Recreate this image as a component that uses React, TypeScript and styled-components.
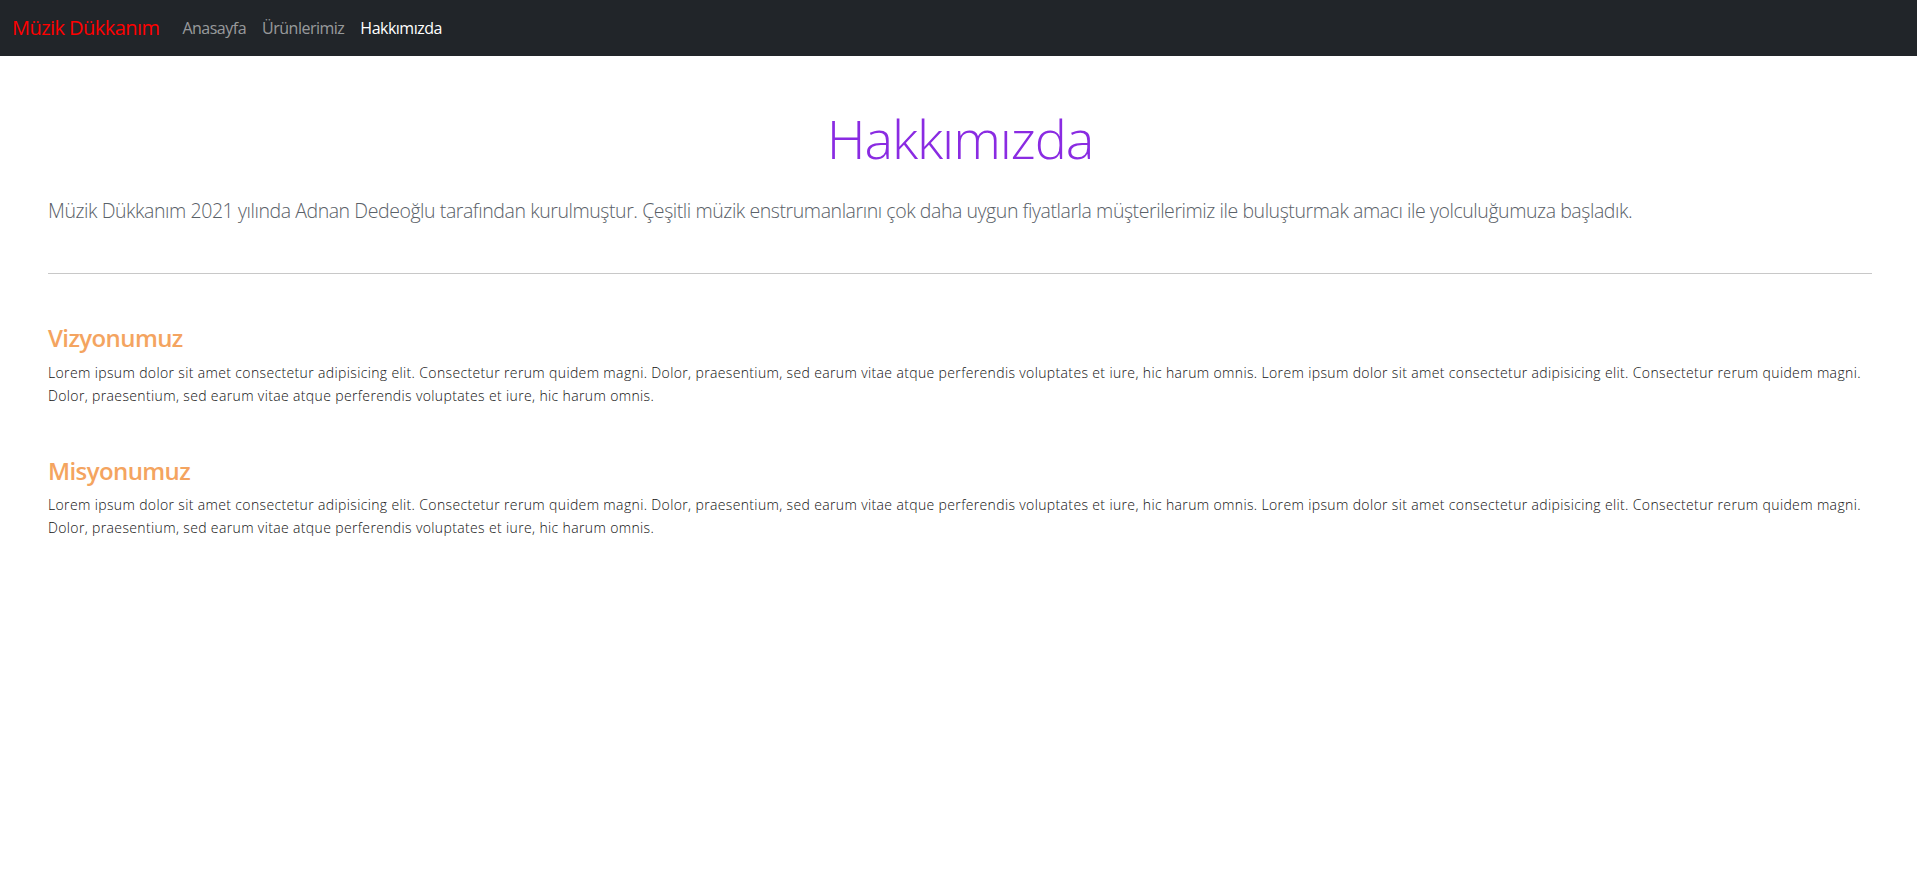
import styled, { createGlobalStyle } from "styled-components";

const GlobalStyle = createGlobalStyle`
  * { box-sizing: border-box; }
  body {
    margin: 0;
    background: #ffffff;
    color: #212529;
    font-family: "Open Sans", "Noto Sans", sans-serif;
    font-size: 16px;
    line-height: 1.5;
  }
`;

const sections = [
  {
    title: "Vizyonumuz",
    text: "Lorem ipsum dolor sit amet consectetur adipisicing elit. Consectetur rerum quidem magni. Dolor, praesentium, sed earum vitae atque perferendis voluptates et iure, hic harum omnis. Lorem ipsum dolor sit amet consectetur adipisicing elit. Consectetur rerum quidem magni. Dolor, praesentium, sed earum vitae atque perferendis voluptates et iure, hic harum omnis.",
  },
  {
    title: "Misyonumuz",
    text: "Lorem ipsum dolor sit amet consectetur adipisicing elit. Consectetur rerum quidem magni. Dolor, praesentium, sed earum vitae atque perferendis voluptates et iure, hic harum omnis. Lorem ipsum dolor sit amet consectetur adipisicing elit. Consectetur rerum quidem magni. Dolor, praesentium, sed earum vitae atque perferendis voluptates et iure, hic harum omnis.",
  },
];

const App = () => {
  return (
    <>
      <GlobalStyle />
      <Navbar>
        <Brand href="#">Müzik Dükkanım</Brand>
        <NavList>
          <NavLink href="#">Anasayfa</NavLink>
          <NavLink href="#">Ürünlerimiz</NavLink>
          <NavLink href="#" $active>Hakkımızda</NavLink>
        </NavList>
      </Navbar>
      <Main>
        <Title>Hakkımızda</Title>
        <Lead>
          Müzik Dükkanım 2021 yılında Adnan Dedeoğlu tarafından kurulmuştur. Çeşitli müzik enstrumanlarını çok daha uygun fiyatlarla müşterilerimiz ile buluşturmak amacı ile yolculuğumuza başladık.
        </Lead>
        <Divider />
        {sections.map((s) => (
          <Section key={s.title}>
            <SectionTitle>{s.title}</SectionTitle>
            <SectionText>
              <small>{s.text}</small>
            </SectionText>
          </Section>
        ))}
      </Main>
    </>
  );
};
export default App;

const Navbar = styled.nav`
  display: flex;
  align-items: center;
  height: 56px;
  padding: 0 12px;
  background: #212529;
`;

const Brand = styled.a`
  color: #ff0000;
  font-size: 20px;
  line-height: 30px;
  text-decoration: none;
  margin-right: 15px;
  letter-spacing: -0.55px;
`;

const NavList = styled.div`
  display: flex;
  align-items: center;
`;

const NavLink = styled.a<{ $active?: boolean }>`
  color: ${(p) => (p.$active ? "#ffffff" : "rgba(255, 255, 255, 0.55)")};
  font-size: 16px;
  line-height: 24px;
  padding: 8px 8px;
  text-decoration: none;
  letter-spacing: -0.5px;
`;

const Main = styled.main`
  padding: 0 45px 0 48px;
`;

const Title = styled.h1`
  margin: 50px 0 25px;
  text-align: center;
  font-size: 54px;
  font-weight: 300;
  line-height: 1.2;
  color: #8a2be2;
  letter-spacing: -1.1px;
`;

const Lead = styled.p`
  margin: 0;
  font-size: 19.5px;
  font-weight: 300;
  line-height: 30px;
  color: #5a6168;
  letter-spacing: -0.43px;
`;

const Divider = styled.hr`
  margin: 47px 0 0;
  border: 0;
  border-top: 1px solid #c8c8c8;
`;

const Section = styled.section`
  margin-top: 50px;

  & + & {
    margin-top: 50px;
  }
`;

const SectionTitle = styled.h4`
  margin: 0 0 8px;
  font-size: 24px;
  font-weight: 600;
  line-height: 1.2;
  color: #f4a460;
  letter-spacing: -0.6px;
`;

const SectionText = styled.p`
  margin: 0;
  font-weight: 300;
  line-height: 23px;
  color: #111111;

  small {
    font-size: 14px;
    letter-spacing: 0.36px;
  }
`;
